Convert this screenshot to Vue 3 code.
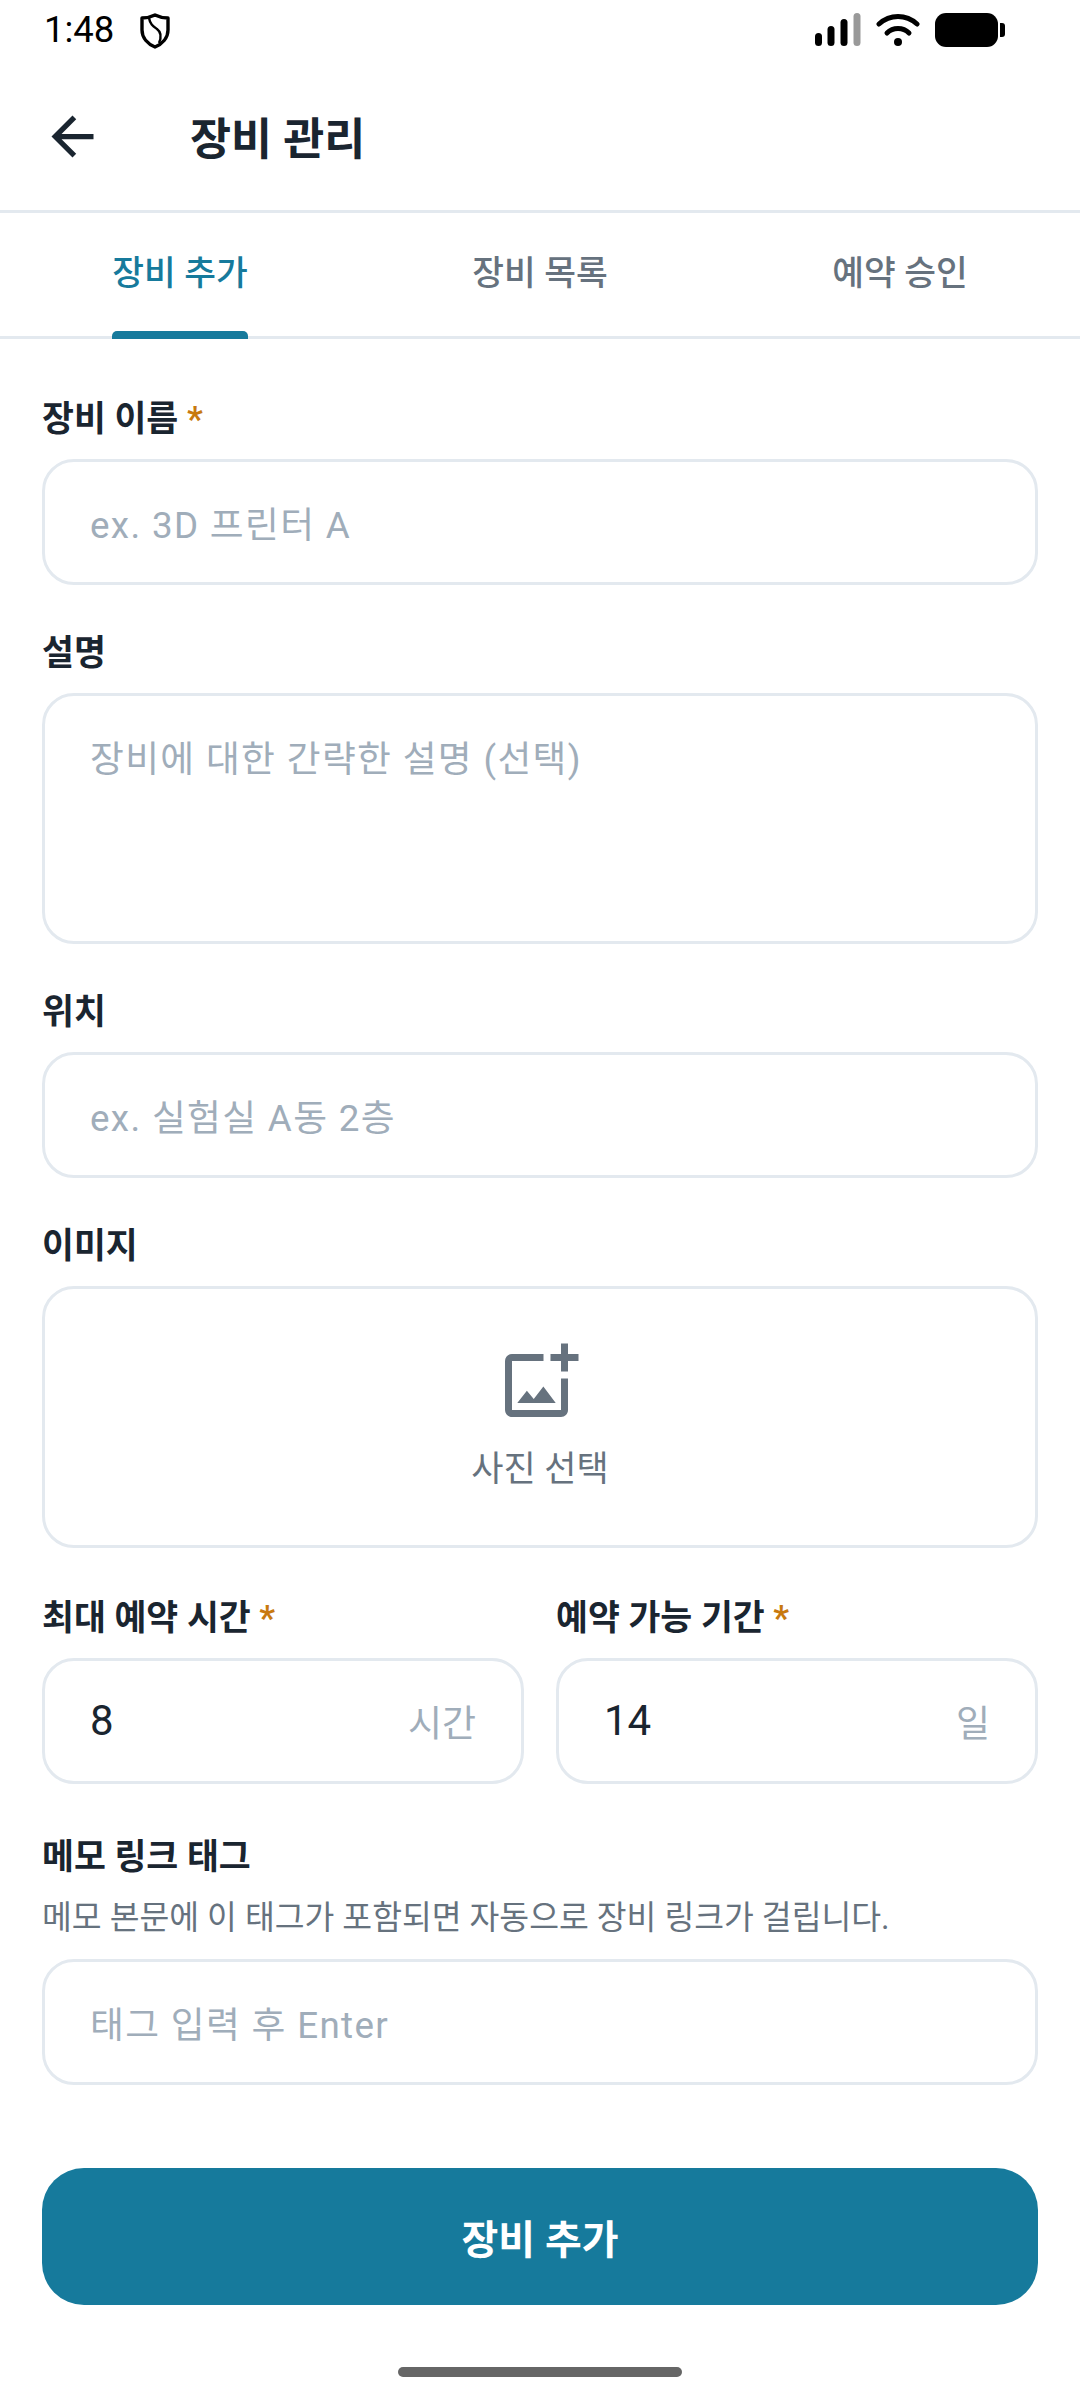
<template>
  <div class="screen">
    <div class="status-bar">
      <span class="time">1:48</span>
      <svg class="shield" width="30" height="36" viewBox="0 0 30 36" fill="none">
        <path d="M15 2 C19 4 24 5 28 5 V17 C28 25 22 31 15 34 C8 31 2 25 2 17 V5 C6 5 11 4 15 2 Z" stroke="#000" stroke-width="3.4" stroke-linejoin="round" />
        <path d="M9 5 C10 11 13 13 17 16 C21 19 22 23 19 30" stroke="#000" stroke-width="2.4" />
      </svg>
      <div class="status-right">
        <svg width="46" height="34" viewBox="0 0 46 34">
          <rect x="0" y="20" width="7" height="13" rx="3.5" fill="#000" />
          <rect x="12.5" y="13" width="7" height="20" rx="3.5" fill="#000" />
          <rect x="25.5" y="6" width="7" height="27" rx="3.5" fill="#000" />
          <rect x="38.5" y="0" width="7" height="33" rx="3.5" fill="#999" />
        </svg>
        <svg width="44" height="34" viewBox="0 0 44 34" fill="none" stroke="#000" stroke-width="5" stroke-linecap="round">
          <path d="M3 11 C14 1 30 1 41 11" />
          <path d="M11 20 C17 14 27 14 33 20" />
          <circle cx="22" cy="29" r="4" fill="#000" stroke="none" />
        </svg>
        <div class="battery"><span class="battery-tip"></span></div>
      </div>
    </div>

    <header class="app-bar">
      <svg class="back" width="63" height="63" viewBox="0 0 24 24">
        <path d="M20 11H7.83l5.59-5.59L12 4l-8 8 8 8 1.41-1.41L7.83 13H20v-2z" fill="#1a2530" />
      </svg>
      <h1>장비 관리</h1>
    </header>

    <nav class="tabs">
      <div v-for="(tab, i) in tabs" :key="tab" class="tab" :class="{ active: i === 0 }">
        <span>{{ tab }}</span>
      </div>
    </nav>

    <form class="form" @submit.prevent>
      <div class="field">
        <label>장비 이름 <em>*</em></label>
        <input type="text" placeholder="ex. 3D 프린터 A" />
      </div>
      <div class="field">
        <label>설명</label>
        <textarea placeholder="장비에 대한 간략한 설명 (선택)"></textarea>
      </div>
      <div class="field">
        <label>위치</label>
        <input type="text" placeholder="ex. 실험실 A동 2층" />
      </div>
      <div class="field">
        <label>이미지</label>
        <div class="image-box">
          <svg width="84" height="84" viewBox="0 0 24 24">
            <path d="M18 20H4V6h9V4H4c-1.1 0-2 .9-2 2v14c0 1.1.9 2 2 2h14c1.1 0 2-.9 2-2v-9h-2v9zm-7.79-3.17l-1.96-2.36L5.5 18h11l-3.54-4.71zM20 4V1h-2v3h-3c.01.01 0 2 0 2h3v2.99c.01.01 2 0 2 0V6h3V4h-3z" fill="#66727e" />
          </svg>
          <span>사진 선택</span>
        </div>
      </div>
      <div class="row">
        <div class="field">
          <label>최대 예약 시간 <em>*</em></label>
          <div class="unit-input"><span class="value">8</span><span class="unit">시간</span></div>
        </div>
        <div class="field">
          <label>예약 가능 기간 <em>*</em></label>
          <div class="unit-input"><span class="value">14</span><span class="unit">일</span></div>
        </div>
      </div>
      <div class="field memo">
        <label>메모 링크 태그</label>
        <p class="help">메모 본문에 이 태그가 포함되면 자동으로 장비 링크가 걸립니다.</p>
        <input type="text" placeholder="태그 입력 후 Enter" />
      </div>
      <button type="submit" class="submit">장비 추가</button>
    </form>

    <div class="home-bar"></div>
  </div>
</template>

<script setup>
const tabs = ["장비 추가", "장비 목록", "예약 승인"];
</script>

<style>
html,
body {
  margin: 0;
  background: #fff;
}
</style>

<style scoped>
.screen {
  width: 1080px;
  height: 2400px;
  overflow: hidden;
  background: #fff;
  font-family: Roboto, "Noto Sans CJK KR", sans-serif;
  color: #1a2530;
  display: flex;
  flex-direction: column;
}

.status-bar {
  height: 60px;
  padding: 0 82px 0 44px;
  display: flex;
  align-items: center;
  color: #000;
}

.time {
  font-size: 36.5px;
  line-height: 60px;
}

.shield {
  margin-left: 26px;
  margin-top: 2px;
}

.status-right {
  margin-left: auto;
  display: flex;
  align-items: center;
  gap: 15px;
}

.battery {
  position: relative;
  width: 63px;
  height: 34px;
  background: #000;
  border-radius: 11px;
}

.battery-tip {
  position: absolute;
  left: 65px;
  top: 10px;
  width: 5px;
  height: 14px;
  background: #000;
  border-radius: 0 3px 3px 0;
}

.app-bar {
  height: 153px;
  box-sizing: border-box;
  border-bottom: 3px solid #e3e9ef;
  padding-left: 41px;
  display: flex;
  align-items: center;
}

.back {
  margin-top: 2px;
}

.app-bar h1 {
  margin: 0 0 0 86px;
  font-size: 44.6px;
  font-weight: 700;
}

.tabs {
  height: 126px;
  box-sizing: border-box;
  border-bottom: 3px solid #e3e9ef;
  display: flex;
}

.tab {
  flex: 1;
  display: flex;
  justify-content: center;
  color: #66727e;
  font-size: 34.5px;
  font-weight: 500;
}

.tab span {
  position: relative;
  height: 126px;
  line-height: 120px;
}

.tab.active {
  color: #167a9c;
}

.tab.active span::after {
  content: "";
  position: absolute;
  left: 0;
  right: 0;
  bottom: 0;
  height: 8px;
  background: #167a9c;
  border-radius: 5px 5px 0 0;
}

.form {
  padding: 0 42px;
  display: flex;
  flex-direction: column;
  gap: 43px;
  margin-top: 55px;
}

.field {
  display: flex;
  flex-direction: column;
  min-width: 0;
  flex: 1;
}

label {
  font-size: 34.7px;
  font-weight: 700;
  line-height: 51px;
  margin-bottom: 21px;
  height: 44px;
}

label em {
  font-style: normal;
  color: #c8790f;
}

input,
textarea,
.unit-input,
.image-box {
  box-sizing: border-box;
  width: 100%;
  border: 3px solid #e3e9ef;
  border-radius: 32px;
  background: #fff;
  font-family: inherit;
  font-size: 36.75px;
  color: #1a2530;
  outline: none;
}

input {
  height: 126px;
  padding: 6px 45px 0;
}

textarea {
  display: block;
  height: 251px;
  padding: 33px 45px;
  resize: none;
}

input::placeholder,
textarea::placeholder {
  color: #a0adba;
  opacity: 1;
  letter-spacing: 1.35px;
}

.image-box {
  height: 262px;
  padding-top: 51px;
  display: flex;
  flex-direction: column;
  align-items: center;
  font-size: 35px;
  line-height: 50px;
  color: #66727e;
}

.image-box span {
  margin-top: 21px;
}

.row {
  display: flex;
  gap: 32px;
  margin-top: 2px;
}

.unit-input {
  height: 126px;
  padding: 0 45px;
  display: flex;
  align-items: center;
  justify-content: space-between;
}

.value {
  font-size: 42px;
  margin-bottom: 2px;
}

.unit {
  font-size: 37px;
  color: #a0adba;
}

.memo {
  margin-top: 5px;
}

.memo label {
  margin-bottom: 18px;
}

.help {
  margin: 1px 0 18px;
  font-size: 32.4px;
  line-height: 46px;
  color: #66727e;
}

.submit {
  height: 137px;
  margin-top: 40px;
  border: 0;
  border-radius: 42px;
  background: #167a9c;
  color: #fff;
  font-family: inherit;
  font-size: 40px;
  font-weight: 700;
}

.home-bar {
  width: 284px;
  height: 10px;
  margin: auto auto 23px;
  border-radius: 5px;
  background: #666;
}
</style>
